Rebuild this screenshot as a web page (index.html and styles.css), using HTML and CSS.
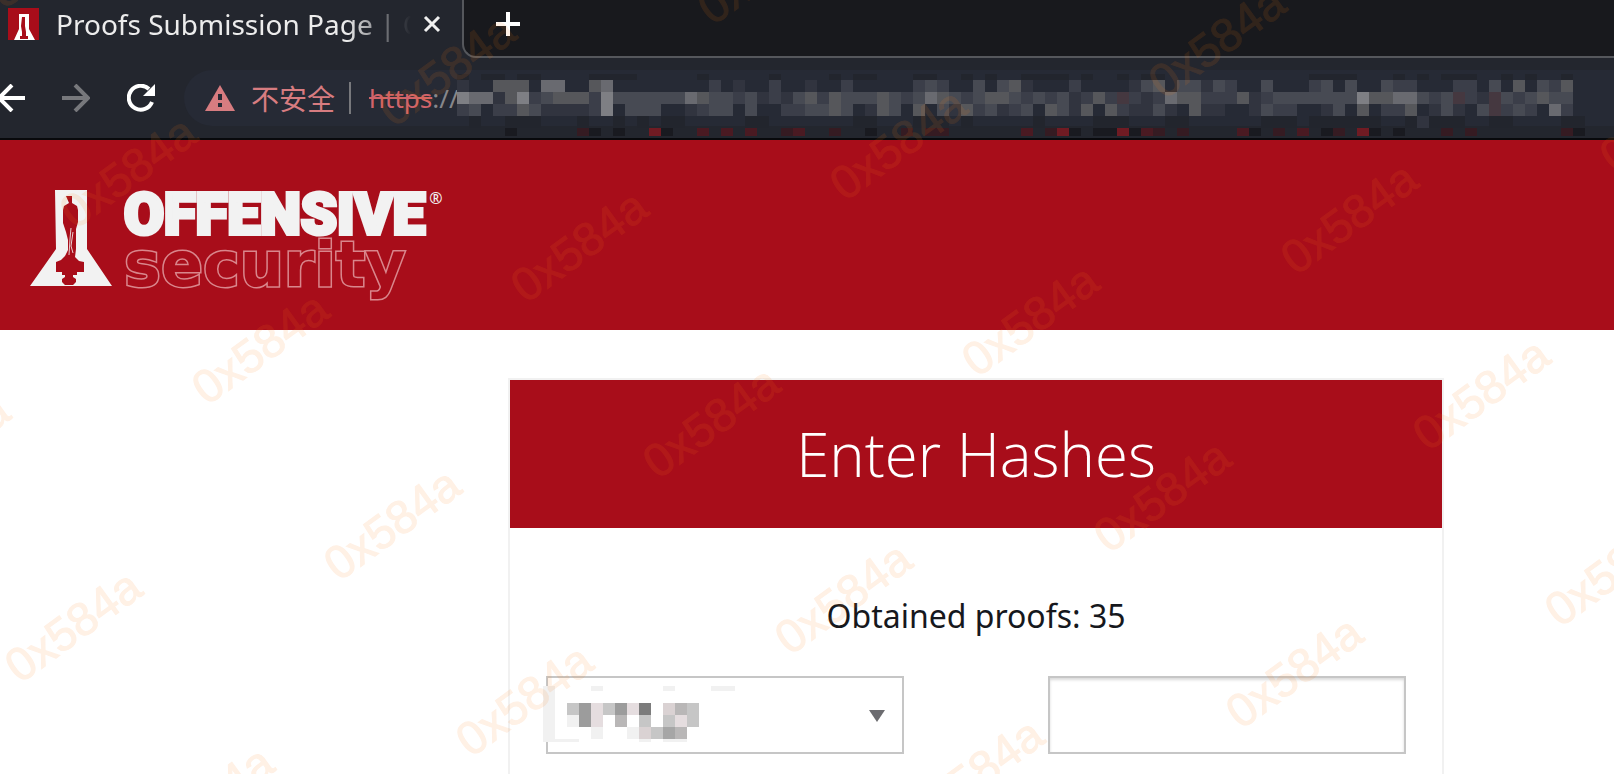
FILE: index.html
```html
<!DOCTYPE html>
<html lang="en">
<head>
    <meta charset="UTF-8">
    <meta name="viewport" content="width=device-width, initial-scale=1.0">
    <title>Proofs Submission Page</title>
    <link rel="stylesheet" href="styles.css">
</head>
<body>
    <div class="browser">
        <div class="tabs">
            <div class="tab">
                <svg class="favicon" viewBox="0 0 31 32" aria-hidden="true">
                    <rect width="31" height="32" fill="#a80d1a"/>
                    <path d="M11 6h10v15l6 11H6l5-11z" fill="#fff"/>
                    <path d="M14 9h3v9l1 6v4h2v3h-8v-3h2v-4l-1-6z" fill="#a80d1a"/>
                </svg>
                <span class="tab-title">Proofs Submission Page | Offensive</span>
                <button class="icon-btn close" aria-label="Close tab">
                    <svg width="18" height="18" viewBox="0 0 18 18"><path d="M2 2l14 14M16 2L2 16" stroke="#f0f0f0" stroke-width="3"/></svg>
                </button>
            </div>
            <div class="tab-rest">
                <button class="icon-btn" aria-label="New tab">
                    <svg width="24" height="24" viewBox="0 0 24 24"><path d="M12 0v24M0 12h24" stroke="#fff" stroke-width="4"/></svg>
                </button>
            </div>
        </div>
        <div class="toolbar">
            <div class="nav">
                <button class="icon-btn" aria-label="Back">
                    <svg width="28" height="28" viewBox="0 0 28 28" fill="none" stroke="#fff" stroke-width="4"><path d="M28 14H3M15 1L2 14l13 13"/></svg>
                </button>
                <button class="icon-btn" aria-label="Forward">
                    <svg width="28" height="28" viewBox="0 0 28 28" fill="none" stroke="#77787c" stroke-width="4"><path d="M0 14h25M13 1l13 13-13 13"/></svg>
                </button>
                <button class="icon-btn" aria-label="Reload">
                    <svg width="28" height="28" viewBox="0 0 28 28"><path d="M25 18A12 12 0 1 1 22 5" fill="none" stroke="#fff" stroke-width="4"/><path d="M28 0v12H16z" fill="#fff"/></svg>
                </button>
            </div>
            <div class="address">
                <svg class="warn" width="30" height="26" viewBox="0 0 30 26" aria-hidden="true">
                    <path d="M15 0l15 26H0z" fill="#d77c80"/>
                    <path d="M13 9h4v6h-4zM13 18h4v4h-4z" fill="#262a35"/>
                </svg>
                <span class="unsafe" lang="zh">不安全</span>
                <span class="divider"></span>
                <span class="url"><s>https</s>://</span>
                <svg class="mosaic" id="urlMosaic" width="1128" height="62" aria-hidden="true"></svg>
            </div>
        </div>
    </div>

    <header class="site-header">
        <a class="logo" href="#" aria-label="Offensive Security">
            <svg class="flask" width="82" height="96" viewBox="0 0 82 96" aria-hidden="true">
                <path d="M25 0h32v59l25 37H0l26-37z" fill="#f2f2f2"/>
                <path d="M36 6h6v7l5 3 1 4v12l-2 7v20l-1 8 4 4 5 1v10h-7v3h-4v2l3 2v3l-3 3h-8l-3-3v-3l3-2v-2h-3v-3h-6V72l5-2 4-4 3-6V50l-2-8-3-9V20l1-4 5-3z" fill="#a80d1a"/>
                <path d="M41 38l-1 11-1 16M43 42l-2 14 2 7" fill="none" stroke="#e9cfd1" stroke-width="1"/>
            </svg>
            <span class="brand">
                <span class="brand-top">OFFENSIVE</span>
                <span class="brand-bottom">security</span>
            </span>
            <span class="reg">®</span>
        </a>
    </header>

    <main class="page">
        <form class="card">
            <h1>Enter Hashes</h1>
            <p class="count">Obtained proofs: 35</p>
            <div class="fields">
                <div class="select-box">
                    <select class="field" aria-label="Target">
                        <option></option>
                    </select>
                    <svg class="arrow" width="16" height="12" viewBox="0 0 16 12" aria-hidden="true"><path d="M0 0h16L8 12z" fill="#6c6c70"/></svg>
                    <svg class="select-mosaic" id="selectMosaic" width="192" height="56" aria-hidden="true"></svg>
                </div>
                <input class="field hash" type="text" aria-label="Hash">
            </div>
        </form>
    </main>

    <svg class="watermark" id="watermark" aria-hidden="true"></svg>

    <script>
        var SVG = 'http://www.w3.org/2000/svg';

        function rect(svg, x, y, w, h, fill) {
            var r = document.createElementNS(SVG, 'rect');
            r.setAttribute('x', x);
            r.setAttribute('y', y);
            r.setAttribute('width', w);
            r.setAttribute('height', h);
            r.setAttribute('fill', fill);
            svg.appendChild(r);
        }

        // one character per 12px cell, 0 is empty
        function drawRows(svg, left, rows, colors) {
            rows.forEach(function (row) {
                for (var i = 0; i < row.cells.length; i++) {
                    var color = colors[row.cells[i]];
                    if (color) {
                        rect(svg, left + i * 12, row.y, 12, row.h, color);
                    }
                }
            });
        }

        drawRows(document.getElementById('urlMosaic'), 0, [
            { y: 0, h: 6, cells: 'f0ff0ff0000ffff00000f00000f0000f0ff000ff00f0f00ffff0f00f0ff000000000000ffff000f0f0fff00f0f00f0f' },
            { y: 6, h: 12, cells: '10044405500450000000020100200100200000232003034100020000134033132003000230300322000220304032400' },
            { y: 18, h: 12, cells: '65514623444263333335433231213424333432354323443232312' + '42s212544222' + '4123333333644553' + '23s21s323433' },
            { y: 30, h: 12, cells: '23022431111260333001233030022334301430403142312304314042113104110' + '013220013040224013103s232052' },
            { y: 42, h: 12, cells: '0f00fff000f00f0f0ff00000ff0000000ff000fff0f00000f0000fff000ff000000fff0ffffff00f1fff00ff0000ff00' },
            { y: 54, h: 8, cells: '0000d00000md0d00Rd00r0r0r00mr00m00d00m0mm000000r0mRd0ddRdrm0m0000rd0m0r0dm0Rd0d000m0m0000000md' }
        ], {
            f: '#22252d', d: '#191a20', m: '#351b22', r: '#4a1a22', R: '#701b23', s: '#453840',
            1: '#31343f', 2: '#3b3e49', 3: '#474a53', 4: '#56575b', 5: '#696a70', 6: '#7e7f84'
        });

        var selectMosaic = document.getElementById('selectMosaic');
        drawRows(selectMosaic, 24, [
            { y: 17, h: 12, cells: 'c9pc9p80qbc' },
            { y: 29, h: 12, cells: 'f9p0b0c0cpc' },
            { y: 41, h: 12, cells: '00f00fqcab0' },
            { y: 53, h: 3, cells: '000000f0ff0' }
        ], {
            f: '#f1f1f1', c: '#c6c6c6', 9: '#9c9c9c', 8: '#7c7c7c', a: '#a6a6a6', b: '#b9b7b7', p: '#e5dddf', q: '#dad2d3'
        });
        rect(selectMosaic, 0, 0, 12, 56, '#f1f1f1');
        rect(selectMosaic, 12, 53, 24, 3, '#f1f1f1');
        rect(selectMosaic, 48, 0, 12, 5, '#f1f1f1');
        rect(selectMosaic, 120, 0, 12, 5, '#f1f1f1');
        rect(selectMosaic, 168, 0, 24, 5, '#f1f1f1');

        // slanted grid of user marks over the whole page
        var watermark = document.getElementById('watermark');
        for (var col = -3; col < 8; col++) {
            for (var row = -3; row < 9; row++) {
                var x = 260 + col * 319 + row * 132;
                var y = 348 - col * 102 + row * 176;
                if (x < -70 || x > window.innerWidth + 70 || y < -50 || y > window.innerHeight + 50) {
                    continue;
                }
                var mark = document.createElementNS(SVG, 'text');
                mark.setAttribute('transform', 'translate(' + x + ' ' + y + ') rotate(-36)');
                mark.setAttribute('text-anchor', 'middle');
                mark.setAttribute('dy', 16);
                mark.textContent = '0x584a';
                watermark.appendChild(mark);
            }
        }
    </script>
</body>
</html>
```
FILE: styles.css
```css
* {
    margin: 0;
    padding: 0;
    box-sizing: border-box;
}
body {
    font-family: 'Noto Sans', 'Noto Sans CJK SC', sans-serif;
    background: #fff;
    color: #16181d;
    height: 100vh;
    overflow: hidden;
}
.browser {
    background: #23262e;
    border-bottom: 2px solid #08090c;
}
.tabs {
    display: flex;
    height: 58px;
}
.tab {
    display: flex;
    align-items: flex-start;
    width: 462px;
    padding: 8px 21px 0 8px;
}
.favicon {
    width: 31px;
    height: 32px;
    margin-right: 17px;
    flex-shrink: 0;
}
.tab-title {
    flex: 1;
    overflow: hidden;
    white-space: nowrap;
    font-size: 28px;
    line-height: 32px;
    color: #ececec;
    height: 40px;
    -webkit-mask-image: linear-gradient(to right, #000 290px, transparent 355px);
    mask-image: linear-gradient(to right, #000 290px, transparent 355px);
}
.icon-btn {
    display: flex;
    border: none;
    background: none;
    cursor: pointer;
}
.close {
    margin: 7px 0 0 8px;
}
.tab-rest {
    flex: 1;
    padding: 12px 32px;
    background: #18191d;
    border-left: 2px solid #55575c;
    border-bottom: 2px solid #55575c;
    border-bottom-left-radius: 14px;
}
.toolbar {
    display: flex;
    align-items: center;
    height: 80px;
}
.nav {
    display: flex;
    gap: 37px;
    width: 184px;
    margin-left: -3px;
    flex-shrink: 0;
}
.address {
    display: flex;
    align-items: center;
    flex: 1;
    height: 56px;
    margin-left: 3px;
    padding-left: 21px;
    background: #262a35;
    border-radius: 28px 0 0 28px;
    font-size: 26px;
    color: #d77c80;
    white-space: nowrap;
    min-width: 0;
}
.warn {
    flex-shrink: 0;
}
.unsafe {
    font-family: 'Noto Sans CJK SC', sans-serif;
    font-size: 28px;
    margin-left: 16px;
}
.divider {
    width: 2px;
    height: 32px;
    margin: 0 18px 0 14px;
    background: #77787c;
}
.url {
    width: 88px;
    color: #86878b;
}
.url s {
    color: #d0636a;
}
.mosaic {
    flex-shrink: 0;
    align-self: flex-start;
    margin-top: 4px;
}
.site-header {
    height: 190px;
    padding: 50px 30px;
    background: #a80d1a;
}
.logo {
    display: inline-flex;
    color: #f2f2f2;
    text-decoration: none;
}
.brand {
    display: flex;
    flex-direction: column;
    margin-left: 12px;
}
.brand-top {
    font-family: Roboto, sans-serif;
    font-weight: 900;
    font-size: 58px;
    line-height: 48px;
    -webkit-text-stroke: 4px #f2f2f2;
}
.brand-bottom {
    font-family: 'DejaVu Sans', sans-serif;
    font-weight: bold;
    font-size: 62px;
    line-height: 54px;
    color: #a80d1a;
    -webkit-text-stroke: 3px #d9868c;
    paint-order: stroke fill;
}
.reg {
    font-size: 16px;
    line-height: 16px;
    margin-left: 4px;
}
.page {
    display: grid;
    grid-template-columns: 508fr 936fr 170fr;
    padding-top: 48px;
}
.card {
    grid-column: 2;
    height: 600px;
    border: 2px solid #f1f1f1;
}
.card h1 {
    height: 148px;
    font-family: 'Open Sans', sans-serif;
    font-weight: 300;
    font-size: 60px;
    line-height: 148px;
    text-align: center;
    color: #fff;
    background: #a80d1a;
}
.count {
    padding-top: 64px;
    font-size: 32px;
    line-height: 48px;
    text-align: center;
}
.fields {
    display: grid;
    grid-template-columns: 1fr 1fr;
    gap: 144px;
    padding: 36px;
}
.select-box {
    position: relative;
}
.field {
    display: block;
    width: 100%;
    height: 78px;
    border: 2px solid #c6c6c6;
    border-radius: 0;
    background: #fff;
    font-size: 28px;
    appearance: none;
}
.hash {
    padding: 0 16px;
    box-shadow: inset 0 2px 3px rgba(0, 0, 0, 0.15);
}
.arrow {
    position: absolute;
    right: 19px;
    top: 34px;
}
.select-mosaic {
    position: absolute;
    left: -3px;
    top: 10px;
}
.watermark {
    position: fixed;
    top: 0;
    left: 0;
    width: 100%;
    height: 100%;
    pointer-events: none;
    font-family: 'Liberation Sans', sans-serif;
    font-size: 47px;
    fill: #ff7d14;
    stroke: #ff7d14;
    stroke-width: 1px;
    opacity: 0.11;
}
```
